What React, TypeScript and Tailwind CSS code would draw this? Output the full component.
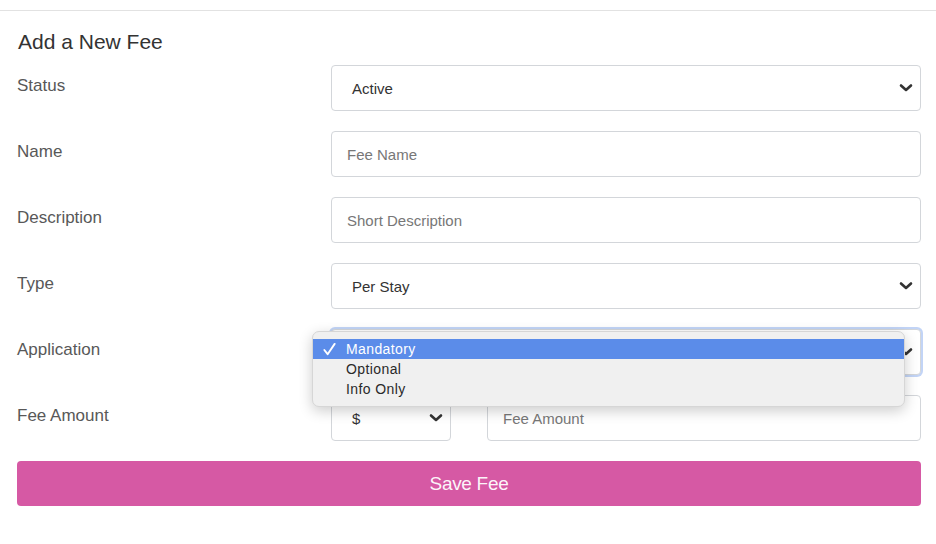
import React from 'react';

const Chevron = ({ className = '' }: { className?: string }) => (
  <svg viewBox="0 0 14 10" className={className} fill="none">
    <path d="M2 2.5 L7 7 L12 2.5" stroke="#333" strokeWidth="2.6" strokeLinecap="round" strokeLinejoin="round" />
  </svg>
);

const Label = ({ children }: { children: React.ReactNode }) => (
  <div className="pt-[11px] text-[17px] leading-[20px] text-[#585858]">{children}</div>
);

const SelectBox = ({ value, className = '' }: { value?: string; className?: string }) => (
  <div className={`h-[46px] flex items-center justify-between pl-[20px] pr-[7px] bg-white border border-[#d3d6da] rounded-[4px] ${className}`}>
    <span className="pt-[2px] text-[15px] text-[#333]">{value}</span>
    <Chevron className="w-[14px] h-[10px]" />
  </div>
);

const TextBox = ({ placeholder, className = '' }: { placeholder: string; className?: string }) => (
  <div className={`h-[46px] flex items-center pl-[15px] bg-white border border-[#d3d6da] rounded-[4px] ${className}`}>
    <span className="pt-[2px] text-[15px] text-[#777]">{placeholder}</span>
  </div>
);

const options = ['Mandatory', 'Optional', 'Info Only'];

export default function App() {
  return (
    <div className="w-[936px] h-[544px] bg-white overflow-hidden pt-[10px]" style={{ fontFamily: '"Liberation Sans", Arial, sans-serif' }}>
      <div className="border-t border-[#e2e2e2]" />
      <div className="pl-[17px] pr-[15px]">
        <h2 className="mt-[18px] text-[21px] leading-[26px] text-[#333] pl-[1px]">Add a New Fee</h2>

        <div className="mt-[10px] flex flex-col gap-[20px]">
          <div className="grid grid-cols-[314px_1fr]">
            <Label>Status</Label>
            <SelectBox value="Active" />
          </div>
          <div className="grid grid-cols-[314px_1fr]">
            <Label>Name</Label>
            <TextBox placeholder="Fee Name" />
          </div>
          <div className="grid grid-cols-[314px_1fr]">
            <Label>Description</Label>
            <TextBox placeholder="Short Description" />
          </div>
          <div className="grid grid-cols-[314px_1fr]">
            <Label>Type</Label>
            <SelectBox value="Per Stay" />
          </div>
          <div className="grid grid-cols-[314px_1fr] relative">
            <Label>Application</Label>
            {/* open select: its value is hidden under the native menu */}
            <SelectBox className="border-[#86acea] shadow-[0_0_0_2px_rgba(120,160,235,0.45)]" />
            <div className="absolute left-[295px] top-[2px] w-[593px] py-[7px] bg-[#f0f0f0] rounded-[7px] border border-[#d6d6d6] shadow-[0_4px_14px_rgba(0,0,0,0.2)] z-10">
              {options.map((opt, i) => (
                <div
                  key={opt}
                  className={`h-[20px] flex items-center text-[14px] tracking-[0.4px] ${i === 0 ? 'bg-[#5b8ce9] text-white' : 'text-[#2a2a2a]'}`}
                >
                  <span className="w-[33px] flex justify-center">
                    {i === 0 && (
                      <svg viewBox="0 0 16 16" className="w-[15px] h-[15px]" fill="none">
                        <path d="M2.5 8.5 L6 13 L13.5 2" stroke="white" strokeWidth="2" strokeLinecap="round" strokeLinejoin="round" />
                      </svg>
                    )}
                  </span>
                  <span>{opt}</span>
                </div>
              ))}
            </div>
          </div>
          <div className="grid grid-cols-[314px_1fr]">
            <Label>Fee Amount</Label>
            <div className="flex gap-[36px]">
              <SelectBox value="$" className="w-[120px]" />
              <TextBox placeholder="Fee Amount" className="flex-1" />
            </div>
          </div>
        </div>

        <button className="mt-[20px] w-full h-[45px] pt-[2px] bg-[#d659a4] rounded-[4px] text-white/95 text-[19px] tracking-[-0.3px]">
          Save Fee
        </button>
      </div>
    </div>
  );
}
